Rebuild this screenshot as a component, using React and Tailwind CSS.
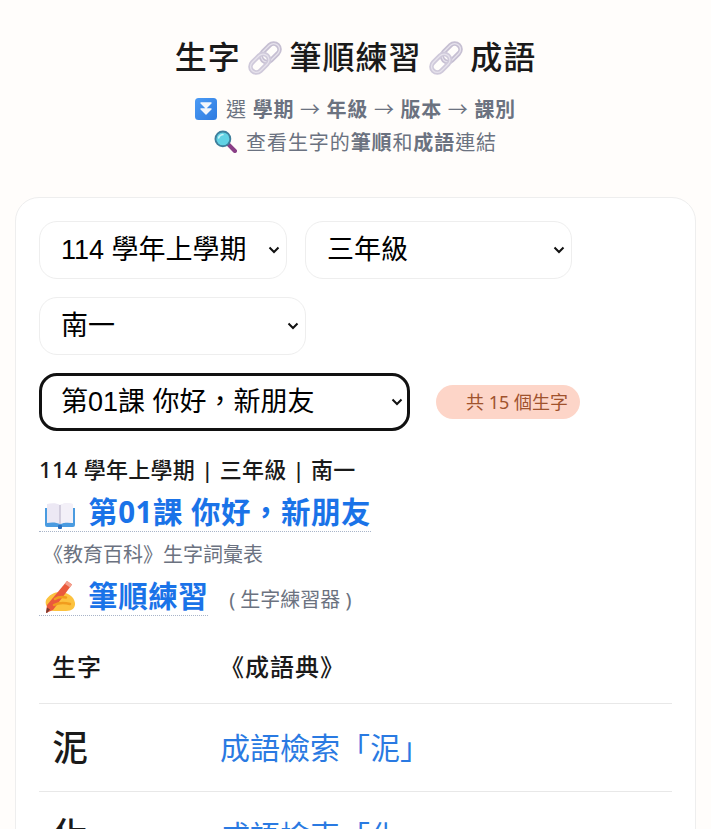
const sans = { fontFamily: '"Noto Sans", "Noto Sans CJK TC", sans-serif' }

const Ring = ({ y, color }) => (
    <g>
        <rect x="10.5" y={y} width="11" height="20" rx="5.5" stroke={color} strokeWidth="4.4" />
        <rect x="10.5" y={y} width="11" height="20" rx="5.5" stroke="#e6e2ec" strokeWidth="1.2" />
    </g>
)

const LinkEmoji = () => (
    <svg className="inline-block w-[34px] h-[34px] -mx-[2px] align-[-6px]" viewBox="0 0 32 32" fill="none">
        <g transform="rotate(45 16 16)">
            <Ring y={-1} color="#c6bfd2" />
            <Ring y={13} color="#cfc9da" />
        </g>
    </svg>
)

const DownEmoji = () => (
    <svg className="inline-block w-[22px] h-[22px] mr-[3px] align-[-3px]" viewBox="0 0 22 22">
        <defs>
            <linearGradient id="down-bg" x1="0" y1="0" x2="1" y2="1">
                <stop offset="0" stopColor="#4b9bf5" />
                <stop offset="1" stopColor="#2f7be0" />
            </linearGradient>
        </defs>
        <rect width="22" height="22" rx="3.5" fill="url(#down-bg)" />
        <path d="M6 5h10l-5 5z M6 11h10l-5 5z" fill="#f3f6fb" stroke="#f3f6fb" strokeWidth="1.4" strokeLinejoin="round" />
    </svg>
)

const SearchEmoji = () => (
    <svg className="inline-block w-[23px] h-[23px] mr-[3px] align-[-3px]" viewBox="0 0 22 22">
        <path d="M14 14l6 6" stroke="#8a3f86" strokeWidth="4" strokeLinecap="round" />
        <circle cx="8.5" cy="8.5" r="8" fill="#3f7f9c" />
        <circle cx="8.5" cy="8.5" r="6.2" fill="#62d2e4" />
        <path d="M4.5 7.5c.6-2 2-3 4-3.2" stroke="#c8f3f8" strokeWidth="1.6" fill="none" strokeLinecap="round" />
    </svg>
)

const BookEmoji = () => (
    <svg className="inline-block w-[32px] h-[32px] ml-[5px] mr-[4px] align-[-8px]" viewBox="0 0 32 32">
        <path d="M1 9h30v17a2 2 0 0 1-2 2H3a2 2 0 0 1-2-2z" fill="#4a9be0" />
        <path d="M3 5c5-1.500 10-1 13 1 3-2 8-2.500 13-1v19c-5-1-10-.5-13 1-3-1.500-8-2-13-1z" fill="#ece8f4" />
        <path d="M16 6c3-2 8-2.500 13-1v19c-5-1-10-.5-13 1z" fill="#f3f0f8" />
        <path d="M16 6v19" stroke="#c8c3d6" strokeWidth="1.500" />
        <rect x="14" y="26" width="4" height="4" rx="1" fill="#2b6fc0" />
    </svg>
)

const WriteEmoji = () => (
    <svg className="inline-block w-[36px] h-[36px] ml-[2px] mr-[3px] align-[-9px]" viewBox="0 0 36 36">
        <path d="M5 20c3-5 8-8 14-8 7 0 14 4 15 11 .5 5-3 8-9 8H13c-3 0-5-1-6-3-2-2-3-5-2-8z" fill="#fcc23f" />
        <path d="M26 1l5 3.500L12 30l-7 3 1-8z" fill="#ea5a3c" />
        <path d="M26 1l5 3.500-2 3-5-3.500z" fill="#f4a08e" />
        <path d="M6 33l-1-.500 1-5 3 2z" fill="#7a3a30" />
        <path d="M14 19c3-2 7-2.500 11-1.500 M13 25c4-2 10-2.500 16-1" stroke="#f19c1e" strokeWidth="2.500" fill="none" strokeLinecap="round" />
    </svg>
)

const Select = ({ width, focused, children }) => (
    <div className={`relative ${width}`}>
        <select
            style={{ fontFamily: '"Liberation Sans", "Noto Sans CJK TC", sans-serif' }}
            className={`w-full h-[58px] text-[27px] text-black bg-white appearance-none rounded-[18px] ${focused ? 'pl-[19px] border-[3px] border-[#111]' : 'pl-[21px] border border-[#eeeeee]'}`}
        >
            <option>{children}</option>
        </select>
        <svg className="absolute right-[7px] top-[25px] w-[12px] h-[8px] pointer-events-none" viewBox="0 0 12 8" fill="none">
            <path d="M1.500 1.500L6 6l4.500-4.500" stroke="#111" strokeWidth="2" />
        </svg>
    </div>
)

const Row = ({ char }) => (
    <div className="flex items-center h-[88px] border-b border-[#e8e8e8] shrink-0">
        <div className="w-[181px] pl-[13px] text-[36px] font-medium text-[#1a1a1a]">{char}</div>
        <a className="text-[30px] text-[#2a7ae2]">成語檢索「{char}」</a>
    </div>
)

const App = () => {
    return (
        <div lang="zh-TW" style={sans} className="h-screen overflow-hidden bg-[#fffdfb] px-[15px]">
            <header className="pt-[33px] h-[197px] text-center">
                <h1 className="text-[32px] leading-[48px] font-medium text-[#1a1a1a] tracking-[1px]">
                    生字 <LinkEmoji /> 筆順練習 <LinkEmoji /> 成語
                </h1>
                <p className="mt-[12px] text-[20px] leading-[33px] text-[#6b7280] tracking-[0.7px]">
                    <DownEmoji /> 選 <b className="font-semibold">學期</b> → <b className="font-semibold">年級</b> → <b className="font-semibold">版本</b> → <b className="font-semibold">課別</b>
                </p>
                <p className="text-[20px] leading-[33px] text-[#6b7280] tracking-[0.9px]">
                    <SearchEmoji /> 查看生字的<b className="font-semibold">筆順</b>和<b className="font-semibold">成語</b>連結
                </p>
            </header>

            <main className="bg-white border border-[#eeeeee] rounded-[24px] p-[23px] min-h-[700px]">
                <div className="flex flex-wrap items-center gap-[18px]">
                    <Select width="w-[248px]">114 學年上學期</Select>
                    <Select width="w-[267px]">三年級</Select>
                    <Select width="w-[267px]">南一</Select>
                    <Select width="w-[371px]" focused>第01課 你好，新朋友</Select>
                    <span className="ml-[8px] h-[34px] w-[144px] pl-[30px] flex items-center rounded-full bg-[#fdd5c8] text-[18px] text-[#a0522d] whitespace-nowrap">
                        共 15 個生字
                    </span>
                </div>

                <p className="mt-[24px] text-[22px] leading-[28px] font-medium text-[#1a1a1a] tracking-[0.3px]">114 學年上學期 | 三年級 | 南一</p>

                <div className="mt-[3px]">
                    <a className="inline-block h-[46px] leading-[52px] text-[29.5px] font-bold text-[#1a73e8] border-b border-dotted border-[#a8b4c8] tracking-[0.5px]">
                        <BookEmoji /> 第01課 你好，新朋友
                    </a>
                </div>
                <p className="mt-[8px] pl-[4px] text-[20px] leading-[30px] text-[#6b7280]">《教育百科》生字詞彙表</p>
                <div className="flex items-end gap-[21px]">
                    <a className="h-[46px] leading-[52px] text-[29.5px] font-bold text-[#1a73e8] border-b border-dotted border-[#a8b4c8] tracking-[0.5px]">
                        <WriteEmoji /> 筆順練習
                    </a>
                    <span className="text-[20px] leading-[32px] text-[#6b7280]">( 生字練習器 )</span>
                </div>

                <div className="mt-[18px] flex flex-col">
                    <div className="flex items-center h-[70px] pb-[4px] border-b border-[#e8e8e8] text-[24px] font-medium text-[#1a1a1a] tracking-[1px]">
                        <div className="w-[181px] pl-[13px]">生字</div>
                        <div>《成語典》</div>
                    </div>
                    <Row char="泥" />
                    <Row char="化" />
                </div>
            </main>
        </div>
    )
}

export default App
